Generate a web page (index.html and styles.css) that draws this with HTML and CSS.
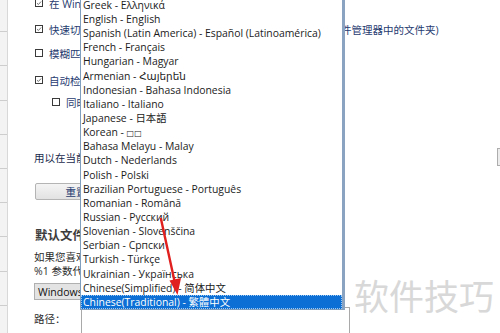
FILE: index.html
```html
<!DOCTYPE html>
<html lang="zh-CN">
<head>
<meta charset="utf-8">
<title>Settings</title>
<link rel="stylesheet" href="styles.css">
</head>
<body>
<div class="window">
  <aside class="sidebar">
    <div class="nav-item"></div><div class="nav-item"></div><div class="nav-item"></div>
    <div class="nav-item"></div><div class="nav-item"></div><div class="nav-item"></div>
    <div class="nav-item"></div><div class="nav-item"></div><div class="nav-item"></div>
    <div class="nav-item"></div>
  </aside>
  <main class="content">
    <div class="check-row r1"><span class="cb"><svg viewBox="0 0 8 8"><path d="M1.3 4.2 L3.2 6 L6.8 2"/></svg></span><span>在 Windows 资源管理器的右键菜单中显示</span></div>
    <div class="check-row r2"><span class="cb"><svg viewBox="0 0 8 8"><path d="M1.3 4.2 L3.2 6 L6.8 2"/></svg></span><span>快速切换到当前在资源管理器中打开的文件夹路径和子目录 &nbsp;(文件管理器中的文件夹)</span></div>
    <div class="check-row r3"><span class="cb empty"></span><span>模糊匹配文件名</span></div>
    <div class="check-row r4"><span class="cb"><svg viewBox="0 0 8 8"><path d="M1.3 4.2 L3.2 6 L6.8 2"/></svg></span><span>自动检查更新</span></div>
    <div class="check-row r5 indent"><span class="cb empty"></span><span>同时检查测试版</span></div>
    <div class="hint-row"><span>用以在当前窗口中打开文件夹</span><span class="browse"></span></div>
    <button class="btn-reset" type="button">重置</button>
    <h2 class="section-title">默认文件管理器</h2>
    <p class="desc">如果您喜欢使用其他文件管理器</p>
    <p class="desc">%1 参数代表文件夹路径</p>
    <div class="select">Windows 资源管理器</div>
    <div class="path-row"><span class="path-label">路径：</span><span class="path-input"></span></div>
  </main>
</div>

<ul class="lang-list">
  <li>Greek - Ελληνικά</li>
  <li>English - English</li>
  <li>Spanish (Latin America) - Español (Latinoamérica)</li>
  <li>French - Français</li>
  <li>Hungarian - Magyar</li>
  <li>Armenian - Հայերեն</li>
  <li>Indonesian - Bahasa Indonesia</li>
  <li>Italiano - Italiano</li>
  <li>Japanese - 日本語</li>
  <li>Korean - <span class="tofu">□□</span></li>
  <li>Bahasa Melayu - Malay</li>
  <li>Dutch - Nederlands</li>
  <li>Polish - Polski</li>
  <li>Brazilian Portuguese - Português</li>
  <li>Romanian - Română</li>
  <li>Russian - Русский</li>
  <li>Slovenian - Slovenščina</li>
  <li>Serbian - Српски</li>
  <li>Turkish - Türkçe</li>
  <li>Ukrainian - Українська</li>
  <li>Chinese(Simplified) - 简体中文</li>
  <li class="selected">Chinese(Traditional) - 繁體中文</li>
</ul>

<svg class="arrow" width="500" height="333" viewBox="0 0 500 333">
  <line x1="161" y1="219" x2="174.5" y2="281" stroke="#e0201f" stroke-width="2.4" stroke-linecap="round"/>
  <polygon points="177.5,295 181,278 169.5,280.5" fill="#e0201f"/>
</svg>

<div class="watermark">软件技巧</div>
</body>
</html>
```

FILE: styles.css
```css
html, body {
  margin: 0;
  padding: 0;
  width: 500px;
  height: 333px;
  overflow: hidden;
  background: #ffffff;
}

body {
  position: relative;
  font-family: "Open Sans", "Noto Sans CJK SC", sans-serif;
  font-size: 10.5px;
  color: #1d2c4c;
}

.window {
  display: flex;
  height: 333px;
}

.sidebar {
  width: 7px;
  flex: none;
  background: #f3f3f3;
  border-right: 1px solid #d8d8d8;
  margin-top: -2px;
}

.nav-item {
  height: 33.2px;
  border-bottom: 1px solid #cdcdcd;
}

.content {
  flex: 1;
  min-width: 0;
  padding-left: 26px;
  display: flex;
  flex-direction: column;
  align-items: flex-start;
}

.check-row {
  display: flex;
  align-items: center;
  gap: 6px;
  height: 14px;
  white-space: nowrap;
  padding-left: 1px;
  color: #1f3b70;
}

.check-row.indent { padding-left: 18px; }

.r1 { margin-top: -4px; }
.r2 { margin-top: 12px; }
.r3 { margin-top: 10px; }
.r4 { margin-top: 13px; }
.r5 { margin-top: 8px; }

.cb {
  width: 8px;
  height: 8px;
  box-sizing: border-box;
  border: 1px solid #3a3a3a;
  background: #fff;
  flex: none;
  display: flex;
}

.cb svg {
  width: 6px;
  height: 6px;
  fill: none;
  stroke: #555;
  stroke-width: 1.1;
}

.hint-row {
  margin-top: 41px;
  height: 14px;
  align-self: stretch;
  display: flex;
  align-items: center;
  justify-content: space-between;
  color: #1a2b4d;
  white-space: nowrap;
}

.browse {
  width: 60px;
  height: 18px;
  box-sizing: border-box;
  margin-right: -57px;
  border: 1px solid #adadad;
  background: #ececec;
  flex: none;
}

.btn-reset {
  margin-top: 19px;
  margin-left: 1px;
  width: 82px;
  height: 22px;
  border: 1px solid #b4b4b4;
  border-radius: 2px;
  background: linear-gradient(#f4f4f4, #e2e2e2);
  font: inherit;
  color: #1f3b70;
  padding: 0;
  text-align: center;
}

.section-title {
  margin: 29px 0 0 1px;
  height: 14px;
  line-height: 14px;
  font-size: 12.5px;
  font-weight: bold;
  color: #3c3c3c;
}

.desc {
  margin: 0;
  height: 14px;
  line-height: 14px;
  color: #2b2b2b;
  white-space: nowrap;
}

.section-title + .desc { margin-top: 7px; }

.select {
  margin-top: 5px;
  width: 200px;
  height: 22px;
  box-sizing: border-box;
  border: 1px solid #b0b0b0;
  background: #e3e3e3;
  padding-left: 3px;
  display: flex;
  align-items: center;
  color: #111;
  white-space: nowrap;
}

.path-row {
  margin-top: 7px;
  display: flex;
  align-items: flex-start;
}

.path-label {
  width: 47px;
  padding-top: 4px;
  color: #2b2b2b;
}

.path-input {
  width: 269px;
  height: 30px;
  box-sizing: border-box;
  border: 1px solid #a9a9a9;
  background: #fff;
}

.lang-list {
  position: absolute;
  left: 80px;
  top: -2.15px;
  width: 261px;
  margin: 0;
  padding: 0;
  list-style: none;
  background: #fff;
  border-left: 1px solid #7f9dbd;
  border-right: 3px solid #8aa3c1;
  border-bottom: 1px solid #7f9dbd;
  font-family: "Open Sans", "Noto Sans CJK JP", "DejaVu Sans", sans-serif;
  font-size: 10.4px;
  color: #1b1b1b;
}

.lang-list li {
  height: 14.15px;
  line-height: 14.15px;
  padding-left: 2px;
  white-space: nowrap;
}

.lang-list li.selected {
  background: #0b6fd5;
  color: #fff;
  outline: 1px dotted #9ccaf5;
  outline-offset: -1px;
}

.tofu {
  font-family: "DejaVu Sans", sans-serif;
  font-size: 8px;
}

.arrow {
  position: absolute;
  left: 0;
  top: 0;
  pointer-events: none;
}

.watermark {
  position: absolute;
  left: 354px;
  top: 277px;
  font-family: "Noto Sans CJK SC", sans-serif;
  font-size: 35px;
  line-height: 35px;
  color: #d8d8d8;
  white-space: nowrap;
}
```
